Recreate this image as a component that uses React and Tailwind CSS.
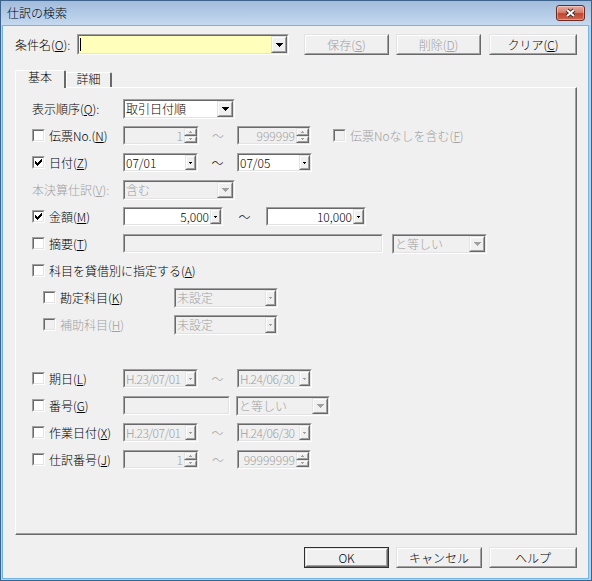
import React from "react";

const Raised = ({ className = "", inner = "", children }) => (
  <div className={`border border-t-[#e3e3e3] border-l-[#e3e3e3] border-r-[#696969] border-b-[#696969] shrink-0 ${className}`}>
    <div className={`w-full h-full border border-t-white border-l-white border-r-[#a0a0a0] border-b-[#a0a0a0] bg-[#f0f0f0] ${inner}`}>
      {children}
    </div>
  </div>
);

const Sunken = ({ className = "", bg = "bg-white", children }) => (
  <div className={`border border-t-[#a0a0a0] border-l-[#a0a0a0] border-r-white border-b-white shrink-0 ${className}`}>
    <div className={`w-full h-full border border-t-[#696969] border-l-[#696969] border-r-[#e3e3e3] border-b-[#e3e3e3] flex ${bg}`}>
      {children}
    </div>
  </div>
);

const BigArrow = ({ color = "#000" }) => (
  <svg width="7" height="4" viewBox="0 0 7 4" shapeRendering="crispEdges">
    <g fill={color}>
      <rect x="0" y="0" width="7" height="1" />
      <rect x="1" y="1" width="5" height="1" />
      <rect x="2" y="2" width="3" height="1" />
      <rect x="3" y="3" width="1" height="1" />
    </g>
  </svg>
);

const SmallArrow = ({ color = "#000", up = false }) => (
  <svg width="3" height="2" viewBox="0 0 3 2" shapeRendering="crispEdges">
    <g fill={color}>
      {up ? (
        <>
          <rect x="1" y="0" width="1" height="1" />
          <rect x="0" y="1" width="3" height="1" />
        </>
      ) : (
        <>
          <rect x="0" y="0" width="3" height="1" />
          <rect x="1" y="1" width="1" height="1" />
        </>
      )}
    </g>
  </svg>
);

const Check = ({ checked = false, disabled = false }) => (
  <div className="w-[13px] h-[13px] border border-t-[#a0a0a0] border-l-[#a0a0a0] border-r-white border-b-white shrink-0">
    <div
      className={`w-full h-full border border-t-[#696969] border-l-[#696969] border-r-[#e3e3e3] border-b-[#e3e3e3] flex items-center justify-center ${
        disabled ? "bg-[#f0f0f0]" : "bg-white"
      }`}
    >
      {checked && (
        <svg width="7" height="7" viewBox="0 0 7 7" shapeRendering="crispEdges">
          <g fill="#000">
            <rect x="6" y="0" width="1" height="1" />
            <rect x="5" y="1" width="2" height="1" />
            <rect x="0" y="2" width="1" height="1" />
            <rect x="4" y="2" width="3" height="1" />
            <rect x="0" y="3" width="2" height="1" />
            <rect x="3" y="3" width="3" height="1" />
            <rect x="0" y="4" width="5" height="1" />
            <rect x="1" y="5" width="3" height="1" />
            <rect x="2" y="6" width="1" height="1" />
          </g>
        </svg>
      )}
    </div>
  </div>
);

const Combo = ({ w, text, disabled = false, h = "h-[20px]" }) => (
  <Sunken className={`${w} ${h}`} bg={disabled ? "bg-[#f0f0f0]" : "bg-white"}>
    <div
      className={`flex-1 flex items-center pl-[1px] overflow-hidden whitespace-nowrap ${
        disabled ? "text-[#a0a0a0]" : "text-black"
      }`}
    >
      {text}
    </div>
    <Raised className="w-[16px] h-full" inner="flex items-center justify-center">
      <BigArrow color={disabled ? "#a0a0a0" : "#000"} />
    </Raised>
  </Sunken>
);

const SCombo = ({ w, text, disabled = false, right = false, h = "h-[19px]", tight = false }) => (
  <Sunken className={`${w} ${h}`} bg={disabled ? "bg-[#f0f0f0]" : "bg-white"}>
    <div
      className={`flex-1 flex items-center px-[1px] overflow-hidden whitespace-nowrap ${
        right ? "justify-end" : ""
      } ${tight ? "tracking-[-0.5px]" : ""} ${disabled ? "text-[#a0a0a0]" : "text-black"}`}
    >
      {text}
    </div>
    <Raised className="w-[11px] h-full" inner="flex items-center justify-center">
      <SmallArrow color={disabled ? "#a0a0a0" : "#000"} />
    </Raised>
  </Sunken>
);

const Spin = ({ w, value }) => (
  <Sunken className={`${w} h-[19px]`} bg="bg-[#f0f0f0]">
    <div className="flex-1 flex items-center justify-end pr-[1px] text-[#a0a0a0] overflow-hidden whitespace-nowrap">
      {value}
    </div>
    <div className="w-[13px] h-full flex flex-col shrink-0">
      <Raised className="flex-1" inner="flex items-center justify-center">
        <SmallArrow up color="#a0a0a0" />
      </Raised>
      <Raised className="flex-1" inner="flex items-center justify-center">
        <SmallArrow color="#a0a0a0" />
      </Raised>
    </div>
  </Sunken>
);

const Field = ({ w }) => <Sunken className={`${w} h-[19px]`} bg="bg-[#f0f0f0]" />;

const Tilde = ({ w, gray = false }) => (
  <div className={`${w} text-center shrink-0 ${gray ? "text-[#a0a0a0]" : "text-black"}`}>～</div>
);

const Row = ({ children }) => <div className="h-[27px] flex items-center shrink-0">{children}</div>;

const CL = ({ w, children, checked = false, disabled = false, pl = "" }) => (
  <div className={`${w} ${pl} flex items-center gap-[4px] shrink-0 ${disabled ? "text-[#a0a0a0]" : "text-black"}`}>
    <Check checked={checked} disabled={disabled} />
    <span className="whitespace-nowrap">{children}</span>
  </div>
);

const Btn = ({ w, children, disabled = false, def = false }) => (
  <div className={`${w} h-[21px] shrink-0 ${def ? "border border-[#303030]" : ""}`}>
    <Raised
      className="w-full h-full"
      inner={`flex items-center justify-center ${disabled ? "text-[#a0a0a0]" : "text-black"}`}
    >
      {children}
    </Raised>
  </div>
);

export default function App() {
  return (
    <div className="w-[592px] h-[581px] flex flex-col border border-[#3d628c] bg-[#b6cfea] font-['Noto_Sans_CJK_JP','Noto_Sans',sans-serif] font-light text-[12px] leading-[14px] text-black overflow-hidden">
      {/* Title bar */}
      <div className="h-[24px] flex items-start bg-[linear-gradient(#a2bcdc,#c5d9ef)] shrink-0">
        <div className="flex-1 pl-[6px] pt-[5px] text-[12px] leading-[14px]">仕訳の検索</div>
        <div className="mt-[4px] mr-[6px] w-[29px] h-[16px] rounded-[3px] border border-[#6b2b22] bg-[linear-gradient(#e9aa9e,#d5806f_45%,#c2442f_55%,#cc6a52)] flex items-center justify-center shadow-[inset_0_0_0_1px_rgba(255,255,255,0.35)]">
          <svg width="13" height="10" viewBox="0 0 13 10">
            <path d="M3 2L10 8M10 2L3 8" stroke="#3f2523" strokeWidth="3.8" />
            <path d="M3 2L10 8M10 2L3 8" stroke="#ffffff" strokeWidth="2" />
          </svg>
        </div>
      </div>

      {/* Body */}
      <div className="flex-1 ml-[1px] mr-[2px] mb-[1px] border border-[#6fb6e6] bg-[#f0f0f0] flex flex-col">
        {/* Row 1 */}
        <div className="mt-[8px] pl-[12px] flex items-center h-[21px]">
          <div className="w-[62px] shrink-0 whitespace-nowrap">
            条件名(<u>O</u>):
          </div>
          <Sunken className="w-[212px] h-[21px]" bg="bg-[#ffffbb]">
            <div className="flex-1 flex items-center pl-[1px]">
              <div className="w-px h-[13px] bg-black" />
            </div>
            <Raised className="w-[16px] h-full" inner="flex items-center justify-center">
              <BigArrow />
            </Raised>
          </Sunken>
          <div className="ml-[15px] flex gap-[7px]">
            <Btn w="w-[85px]" disabled>
              保存(<u>S</u>)
            </Btn>
            <Btn w="w-[85px]" disabled>
              削除(<u>D</u>)
            </Btn>
          </div>
          <div className="ml-[8px]">
            <Btn w="w-[88px]">
              クリア(<u>C</u>)
            </Btn>
          </div>
        </div>

        {/* Tabs */}
        <div className="mt-[15px] pl-[12px] h-[17px] flex items-end">
          <div className="relative z-10 -mb-[1px] w-[51px] h-[18px] bg-[#f0f0f0] border-t border-l border-t-white border-l-white border-r-2 border-r-[#696969] rounded-tl-[2px] rounded-tr-[2px] flex items-start justify-center pt-[1px] leading-[10px]">
            基本
          </div>
          <div className="w-[46px] h-[15px] bg-[#f0f0f0] border-t border-l border-t-white border-l-white border-r-2 border-r-[#696969] rounded-tr-[2px] flex items-start justify-center pt-[1px] leading-[10px]">
            詳細
          </div>
        </div>

        {/* Panel */}
        <div className="ml-[12px] w-[562px] h-[448px] border border-t-white border-l-white border-r-[#696969] border-b-[#696969]">
          <div className="w-full h-full border-r border-b border-r-[#a0a0a0] border-b-[#a0a0a0] flex flex-col pt-[7px] pl-[16px]">
            <Row>
              <div className="w-[91px] shrink-0 whitespace-nowrap">
                表示順序(<u>Q</u>):
              </div>
              <Combo w="w-[112px]" text="取引日付順" />
            </Row>

            <Row>
              <CL w="w-[91px]">
                伝票No.(<u>N</u>)
              </CL>
              <Spin w="w-[76px]" value="1" />
              <Tilde w="w-[38px]" gray />
              <Spin w="w-[74px]" value="999999" />
              <div className="ml-[22px] flex items-center gap-[4px] text-[#a0a0a0] whitespace-nowrap">
                <Check disabled />
                <span>
                  伝票Noなしを含む(<u>F</u>)
                </span>
              </div>
            </Row>

            <Row>
              <CL w="w-[91px]" checked>
                日付(<u>Z</u>)
              </CL>
              <SCombo w="w-[75px]" text="07/01" />
              <Tilde w="w-[39px]" />
              <SCombo w="w-[75px]" text="07/05" />
            </Row>

            <Row>
              <div className="w-[91px] shrink-0 whitespace-nowrap text-[#a0a0a0]">
                本決算仕訳(<u>V</u>):
              </div>
              <Combo w="w-[112px]" text="含む" disabled />
            </Row>

            <Row>
              <CL w="w-[91px]" checked>
                金額(<u>M</u>)
              </CL>
              <SCombo w="w-[100px]" text="5,000" right />
              <Tilde w="w-[43px]" />
              <SCombo w="w-[100px]" text="10,000" right />
            </Row>

            <Row>
              <CL w="w-[91px]">
                摘要(<u>T</u>)
              </CL>
              <Field w="w-[260px]" />
              <div className="ml-[9px]">
                <Combo w="w-[95px]" text="と等しい" disabled />
              </div>
            </Row>

            <Row>
              <CL w="w-[200px]">
                科目を貸借別に指定する(<u>A</u>)
              </CL>
            </Row>

            <Row>
              <CL w="w-[142px]" pl="pl-[11px]">
                勘定科目(<u>K</u>)
              </CL>
              <SCombo w="w-[104px]" h="h-[20px]" text="未設定" disabled />
            </Row>

            <Row>
              <CL w="w-[142px]" pl="pl-[11px]" disabled>
                補助科目(<u>H</u>)
              </CL>
              <SCombo w="w-[104px]" h="h-[20px]" text="未設定" disabled />
            </Row>

            <Row />

            <Row>
              <CL w="w-[91px]">
                期日(<u>L</u>)
              </CL>
              <SCombo w="w-[75px]" text="H.23/07/01" disabled tight />
              <Tilde w="w-[39px]" gray />
              <SCombo w="w-[75px]" text="H.24/06/30" disabled tight />
            </Row>

            <Row>
              <CL w="w-[91px]">
                番号(<u>G</u>)
              </CL>
              <Field w="w-[107px]" />
              <div className="ml-[6px]">
                <Combo w="w-[94px]" text="と等しい" disabled />
              </div>
            </Row>

            <Row>
              <CL w="w-[91px]">
                作業日付(<u>X</u>)
              </CL>
              <SCombo w="w-[75px]" text="H.23/07/01" disabled tight />
              <Tilde w="w-[39px]" gray />
              <SCombo w="w-[75px]" text="H.24/06/30" disabled tight />
            </Row>

            <Row>
              <CL w="w-[91px]">
                仕訳番号(<u>J</u>)
              </CL>
              <Spin w="w-[76px]" value="1" />
              <Tilde w="w-[38px]" gray />
              <Spin w="w-[74px]" value="99999999" />
            </Row>
          </div>
        </div>

        {/* Bottom buttons */}
        <div className="mt-[12px] pr-[11px] flex justify-end">
          <Btn w="w-[85px]" def>
            OK
          </Btn>
          <div className="ml-[7px]">
            <Btn w="w-[86px]">キャンセル</Btn>
          </div>
          <div className="ml-[7px]">
            <Btn w="w-[88px]">ヘルプ</Btn>
          </div>
        </div>
      </div>
    </div>
  );
}
